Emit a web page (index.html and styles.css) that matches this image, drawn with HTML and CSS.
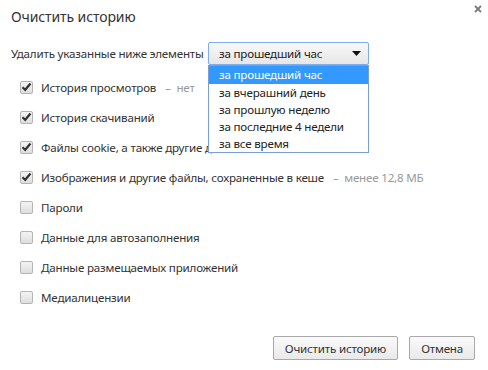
FILE: index.html
```html
<!DOCTYPE html>
<html lang="ru">
<head>
<meta charset="utf-8">
<title>Очистить историю</title>
<link rel="stylesheet" href="styles.css">
</head>
<body>
<div class="dialog">
  <div class="header">
    <h1 class="title">Очистить историю</h1>
    <button class="close" aria-label="Закрыть">
      <svg width="8" height="8" viewBox="0 0 8 8"><path d="M1 1 L7 7 M7 1 L1 7" stroke="#7a7a7a" stroke-width="1.8"/></svg>
    </button>
  </div>
  <div class="range-row">
    <span class="range-label">Удалить указанные ниже элементы</span>
    <div class="select-wrap">
      <div class="select">
        <span>за прошедший час</span>
        <svg class="arrow" width="9" height="5" viewBox="0 0 9 5"><path d="M0 0 H9 L4.5 5 Z" fill="#111"/></svg>
      </div>
      <ul class="dropdown">
        <li class="item selected">за прошедший час</li>
        <li class="item">за вчерашний день</li>
        <li class="item">за прошлую неделю</li>
        <li class="item">за последние 4 недели</li>
        <li class="item">за все время</li>
      </ul>
    </div>
  </div>
  <ul class="options">
    <li class="option"><span class="cb checked"><svg width="11" height="10" viewBox="0 0 11 10"><path d="M1.5 5.2 L4.2 7.8 L9.5 1.5" fill="none" stroke="#333" stroke-width="2.2"/></svg></span><span class="label">История просмотров</span><span class="note">–&nbsp; нет</span></li>
    <li class="option"><span class="cb checked"><svg width="11" height="10" viewBox="0 0 11 10"><path d="M1.5 5.2 L4.2 7.8 L9.5 1.5" fill="none" stroke="#333" stroke-width="2.2"/></svg></span><span class="label">История скачиваний</span></li>
    <li class="option"><span class="cb checked"><svg width="11" height="10" viewBox="0 0 11 10"><path d="M1.5 5.2 L4.2 7.8 L9.5 1.5" fill="none" stroke="#333" stroke-width="2.2"/></svg></span><span class="label">Файлы cookie, а также другие данные сайтов</span></li>
    <li class="option"><span class="cb checked"><svg width="11" height="10" viewBox="0 0 11 10"><path d="M1.5 5.2 L4.2 7.8 L9.5 1.5" fill="none" stroke="#333" stroke-width="2.2"/></svg></span><span class="label">Изображения и другие файлы, сохраненные в кеше</span><span class="note">–&nbsp; менее 12,8 МБ</span></li>
    <li class="option"><span class="cb"></span><span class="label">Пароли</span></li>
    <li class="option"><span class="cb"></span><span class="label">Данные для автозаполнения</span></li>
    <li class="option"><span class="cb"></span><span class="label">Данные размещаемых приложений</span></li>
    <li class="option"><span class="cb"></span><span class="label">Медиалицензии</span></li>
  </ul>
  <div class="buttons">
    <button class="btn">Очистить историю</button>
    <button class="btn">Отмена</button>
  </div>
</div>
</body>
</html>
```
FILE: styles.css
```css
* { box-sizing: border-box; }
html, body {
  margin: 0;
  padding: 0;
  background: #fff;
}
body {
  font-family: "Noto Sans", "Open Sans", sans-serif;
  font-size: 11.6px;
  letter-spacing: -0.2px;
  color: #333;
  width: 488px;
  height: 370px;
  overflow: hidden;
}
.dialog {
  padding: 7px 13px 0 11px;
}
.header {
  display: flex;
  justify-content: space-between;
  align-items: flex-start;
  height: 20px;
}
.title {
  margin: 0;
  font-size: 14px;
  letter-spacing: -0.1px;
  font-weight: normal;
  line-height: 20px;
  color: #333;
}
.close {
  border: 0;
  background: none;
  padding: 0;
  margin: -3px -8px 0 0;
  width: 10px;
  height: 10px;
  display: flex;
  align-items: center;
  justify-content: center;
}
.range-row {
  display: flex;
  align-items: center;
  margin-top: 15px;
  height: 23px;
}
.range-label {
  line-height: 23px;
  width: 197px;
  white-space: nowrap;
}
.select-wrap {
  position: relative;
}
.select {
  width: 161px;
  height: 23px;
  border: 1px solid #7eadea;
  border-radius: 2px;
  background: linear-gradient(#f8f8f8, #e6e6e6);
  display: flex;
  align-items: center;
  justify-content: space-between;
  padding: 0 7px 0 10px;
  color: #222;
}
.arrow { display: block; }
.dropdown {
  position: absolute;
  left: 0;
  top: 23px;
  width: 161px;
  margin: 0;
  padding: 0;
  list-style: none;
  background: #fff;
  border: 1px solid #7a9fd6;
  z-index: 5;
}
.item {
  height: 17px;
  line-height: 17px;
  padding-left: 10px;
  color: #222;
  white-space: nowrap;
}
.item.selected {
  background: #3399ff;
  color: #fff;
  height: 18px;
  line-height: 18px;
}
.options {
  list-style: none;
  margin: 7px 0 0 9px;
  padding: 0;
}
.option {
  display: flex;
  align-items: center;
  height: 30px;
  white-space: nowrap;
}
.cb {
  width: 13px;
  height: 13px;
  border: 1px solid #b4b4b4;
  border-radius: 2px;
  background: linear-gradient(#f3f3f3, #dedede);
  margin-right: 8px;
  display: flex;
  align-items: center;
  justify-content: center;
  flex: none;
}
.cb svg { display: block; margin-top: -1px; }
.label { color: #333; }
.note {
  color: #999;
  margin-left: 9px;
}
.buttons {
  display: flex;
  justify-content: flex-end;
  gap: 11px;
  margin-top: 24px;
}
.btn {
  font-family: inherit;
  font-size: 11.6px;
  letter-spacing: -0.2px;
  color: #333;
  height: 24px;
  padding: 0 11px;
  border: 1px solid #a9a9a9;
  border-radius: 2px;
  background: linear-gradient(#fafafa, #e9e9e9);
}
```
